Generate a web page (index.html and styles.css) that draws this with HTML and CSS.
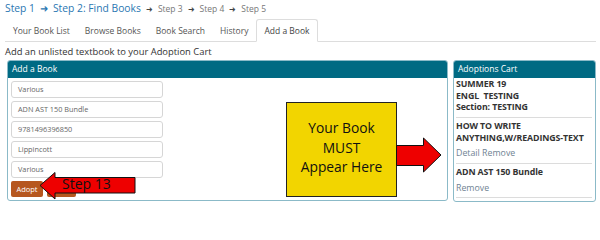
FILE: index.html
```html
<!DOCTYPE html>
<html>
<head>
<meta charset="utf-8">
<link rel="stylesheet" href="styles.css">
</head>
<body>
<div class="page">
  <div class="steps">
    <span class="step big">Step 1</span>
    <span class="arr big-arr">&#x279C;</span>
    <span class="step big">Step 2: Find Books</span>
    <span class="arr">&#x279C;</span>
    <span class="step small">Step 3</span>
    <span class="arr">&#x279C;</span>
    <span class="step small">Step 4</span>
    <span class="arr">&#x279C;</span>
    <span class="step small">Step 5</span>
  </div>
  <ul class="tabs">
    <li class="tab">Your Book List</li>
    <li class="tab">Browse Books</li>
    <li class="tab">Book Search</li>
    <li class="tab">History</li>
    <li class="tab active">Add a Book</li>
  </ul>
  <p class="intro">Add an unlisted textbook to your Adoption Cart</p>
  <div class="main">
    <section class="panel add">
      <header class="panel-head">Add a Book</header>
      <div class="panel-body">
        <div class="field">Various</div>
        <div class="field">ADN AST 150 Bundle</div>
        <div class="field">9781496396850</div>
        <div class="field">Lippincott</div>
        <div class="field">Various</div>
        <div class="buttons">
          <span class="btn">Adopt</span>
          <span class="btn btn2"></span>
        </div>
      </div>
    </section>
    <section class="panel cart">
      <header class="panel-head">Adoptions Cart</header>
      <div class="panel-body cart-body">
        <div class="cart-item first">
          <div class="b">SUMMER 19</div>
          <div class="b">ENGL&nbsp; TESTING</div>
          <div class="b">Section: TESTING</div>
        </div>
        <div class="cart-item">
          <div class="b">HOW TO WRITE</div>
          <div class="b">ANYTHING,W/READINGS-TEXT</div>
          <div class="links">Detail Remove</div>
        </div>
        <div class="cart-item">
          <div class="b">ADN AST 150 Bundle</div>
          <div class="links">Remove</div>
        </div>
      </div>
    </section>
  </div>

  <div class="callout">Your Book<br>MUST<br>Appear Here</div>
  <svg class="arrow-right" width="46" height="38" viewBox="0 0 46 38">
    <polygon points="0.5,8.5 27.5,8.5 27.5,1 45,18 27.5,35 27.5,28.5 0.5,28.5" fill="#ee0000" stroke="#111" stroke-width="1"/>
  </svg>
  <div class="arrow-left">
    <svg width="100" height="32" viewBox="0 0 100 32">
      <polygon points="1,13.5 16,0.5 16,5.5 96,5.5 96,21 16,21 16,27 1,13.5" fill="#ee0000" stroke="#111" stroke-width="1"/>
    </svg>
    <span class="arrow-label">Step 13</span>
  </div>
</div>
</body>
</html>
```

FILE: styles.css
```css
* { box-sizing: border-box; }
html, body { margin: 0; padding: 0; background: #fff; }
body {
  font-family: "Open Sans", "Liberation Sans", sans-serif;
  color: #333;
  width: 600px;
  height: 206px;
  overflow: hidden;
}
.page { position: relative; padding: 0 4px 0 5px; }

.steps {
  display: flex;
  align-items: baseline;
  height: 17px;
  padding-top: 1px;
  white-space: nowrap;
}
.step.big { font-size: 10.3px; color: #2a77b2; }
.step.small { font-size: 8.5px; color: #777; }
.arr { font-size: 8px; color: #444; margin: 0 5px; }
.big-arr { font-size: 10px; color: #2a77b2; margin: 0 5px; }

.tabs {
  list-style: none;
  margin: 2px 0 0 0;
  padding: 0 0 0 1px;
  display: flex;
  height: 23px;
  border-bottom: 1px solid #dddddd;
}
.tab {
  font-size: 8.5px;
  color: #555;
  padding: 0 6px;
  margin-right: 1px;
  line-height: 22px;
  border: 1px solid transparent;
  border-radius: 3px 3px 0 0;
}
.tab.active {
  border-color: #ddd;
  border-bottom-color: #fff;
  background: #fff;
  height: 23px;
  padding: 0 7px;
  color: #444;
}

.intro {
  margin: 0;
  font-size: 9.4px;
  line-height: 13px;
  padding-top: 3px;
  color: #333;
}

.main {
  display: flex;
  gap: 5px;
  margin-top: 2px;
  padding-left: 2px;
}
.panel {
  border: 1px solid #8bbac8;
  border-radius: 3px;
  overflow: hidden;
}
.panel.add { width: 441px; height: 141px; }
.panel.cart { width: 143px; height: 142px; }
.panel-head {
  background: #006a83;
  color: #fff;
  font-size: 8.5px;
  height: 17px;
  line-height: 16px;
  padding-left: 4px;
}
.panel-body { padding: 3px 3px 0 3px; }
.field {
  width: 152px;
  height: 17px;
  border: 1px solid #d6d6d6;
  border-radius: 3px;
  font-size: 7.3px;
  line-height: 15px;
  padding-left: 6px;
  color: #666;
  margin-bottom: 3px;
}
.buttons { display: flex; gap: 4px; margin-top: 1px; }
.btn {
  display: inline-block;
  background: #b6571f;
  color: #fff;
  font-size: 7.5px;
  height: 16px;
  line-height: 16px;
  border-radius: 2px;
  width: 32px;
  text-align: center;
}
.btn2 { width: 29px; }

.cart-body { padding: 1px 3px 0 2px; }
.cart-item {
  border-bottom: 1px solid #dcdcdc;
  padding: 3.5px 0 3px 0;
  font-size: 8.8px;
  line-height: 11.5px;
}
.cart-item.first { padding-top: 0; }
.b { font-weight: 700; color: #333; letter-spacing: -0.1px; }
.links { color: #6f8393; margin-top: 4px; }

.callout {
  position: absolute;
  left: 286px;
  top: 102px;
  width: 111px;
  height: 95px;
  background: #f2d500;
  border: 1px solid #222;
  font-size: 13.8px;
  line-height: 19.5px;
  color: #111;
  text-align: center;
  padding-top: 15px;
}
.arrow-right {
  position: absolute;
  left: 396px;
  top: 137px;
}
.arrow-left {
  position: absolute;
  left: 39px;
  top: 172px;
  width: 100px;
  height: 32px;
}
.arrow-left svg { position: absolute; left: 0; top: 0; }
.arrow-label {
  position: absolute;
  left: 23px;
  top: 3px;
  font-size: 14px;
  line-height: 18px;
  color: #111;
}
```
